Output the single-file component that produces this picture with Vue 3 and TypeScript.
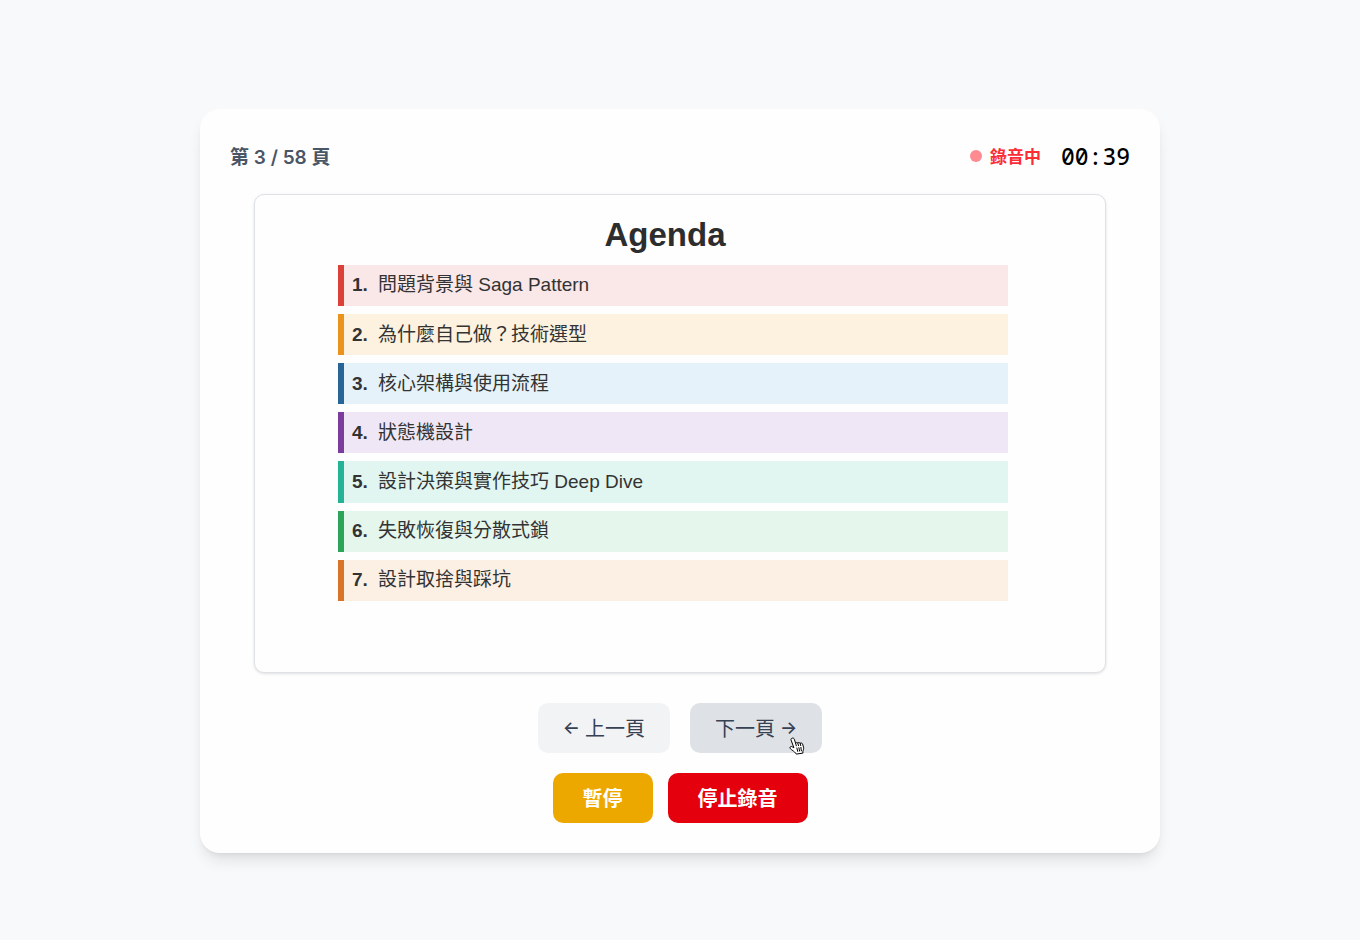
<script setup lang="ts">
import { ref } from 'vue'

interface AgendaItem {
  title: string
  tone: string
}

const page = ref(3)
const total = 58
const paused = ref(false)

const agenda: AgendaItem[] = [
  { title: '問題背景與 Saga Pattern', tone: 'red' },
  { title: '為什麼自己做？技術選型', tone: 'amber' },
  { title: '核心架構與使用流程', tone: 'blue' },
  { title: '狀態機設計', tone: 'purple' },
  { title: '設計決策與實作技巧 Deep Dive', tone: 'teal' },
  { title: '失敗恢復與分散式鎖', tone: 'green' },
  { title: '設計取捨與踩坑', tone: 'orange' },
]
</script>

<template>
  <main class="page">
    <section class="card">
      <header class="head">
        <span class="counter">第 {{ page }} / {{ total }} 頁</span>
        <div class="status">
          <span class="recording"><i class="dot"></i>錄音中</span>
          <time class="timer">00:39</time>
        </div>
      </header>

      <article class="slide">
        <h1>Agenda</h1>
        <ol class="agenda">
          <li v-for="(item, i) in agenda" :key="item.title" :class="item.tone">
            <b>{{ i + 1 }}.</b><span>{{ item.title }}</span>
          </li>
        </ol>
      </article>

      <nav class="row pages">
        <button type="button" class="btn prev" @click="page = Math.max(1, page - 1)">
          <span class="arrow">←</span> <span>上一頁</span>
        </button>
        <button type="button" class="btn next" @click="page = Math.min(total, page + 1)">
          <span>下一頁</span> <span class="arrow">→</span>
          <svg class="pointer" viewBox="0 0 16 18" aria-hidden="true">
            <path
              d="M3.2 1.2C4.2.8 5 1.3 5.3 2.2L6.6 6.2C7.1 5.4 8.3 5.3 8.8 6.1C9.4 5.3 10.7 5.4 11.1 6.3C11.9 5.7 13.2 6 13.6 7L14.5 10.2C14.9 11.7 14.4 13 13.9 14.2L13.9 16.1L7.3 17.1C6.5 15.5 4.7 14.3 3.1 13.1C2.1 12.4.8 11.5 1 10.5C1.2 9.4 2.5 9.2 3.4 9.9L4.9 10.8L2.1 3.1C1.8 2.1 2.2 1.5 3.2 1.2Z"
              fill="#fff" stroke="#000" stroke-width="1" stroke-linejoin="round"
            />
            <path d="M6.6 6.2L7.3 8.8M8.8 6.1L9.5 8.6M11.1 6.3L11.7 8.6M7.9 11L8.7 14.4M9.9 10.7L10.6 14.1M11.9 10.4L12.4 13.8" fill="none" stroke="#000" stroke-width="1" stroke-linecap="round" />
          </svg>
        </button>
      </nav>
      <div class="row actions">
        <button type="button" class="btn pause" @click="paused = !paused">暫停</button>
        <button type="button" class="btn stop">停止錄音</button>
      </div>
    </section>
  </main>
</template>

<style>
body {
  margin: 0;
  background: #f8f9fb;
}
</style>

<style scoped>
* {
  box-sizing: border-box;
}

.page {
  display: flex;
  align-items: center;
  justify-content: center;
  min-height: 100vh;
  padding: 42px 20px 20px;
  font-family: Inter, 'Noto Sans CJK TC', sans-serif;
  font-size: 20px;
}

.card {
  width: 100%;
  max-width: 960px;
  padding: 30px;
  border-radius: 20px;
  background: #fefefe;
  box-shadow: 0 10px 15px -3px rgb(0 0 0 / 10%), 0 4px 6px -4px rgb(0 0 0 / 10%);
}

.head {
  display: flex;
  align-items: center;
  justify-content: space-between;
  height: 35px;
  padding-bottom: 1px;
}

.counter {
  color: #4a5565;
  font-size: 19px;
  font-weight: 600;
}

.status,
.recording {
  display: flex;
  align-items: center;
}

.status {
  gap: 20px;
}

.recording {
  gap: 8px;
  color: #fb2c36;
  font-size: 17px;
  font-weight: 600;
}

.dot {
  width: 12px;
  height: 12px;
  border-radius: 50%;
  background: #fd8b91;
}

.timer {
  color: #000;
  font-family: 'Noto Sans Mono', 'DejaVu Sans Mono', monospace;
  font-size: 23px;
  font-weight: 500;
}

.slide {
  max-width: 852px;
  aspect-ratio: 16 / 9;
  margin: 20px auto 30px;
  padding: 20px 97px 0 83px;
  border: 1px solid #dee2e6;
  border-radius: 10px;
  background: #fefefe;
  box-shadow: 0 1px 3px rgb(0 0 0 / 12%);
  color: #2d2d2d;
  font-family: 'Liberation Sans', 'Noto Sans CJK TC', sans-serif;
}

h1 {
  margin: 0 0 10px;
  padding-right: 16px;
  font-size: 33px;
  line-height: 40px;
  text-align: center;
}

.agenda {
  display: grid;
  grid-auto-rows: 1fr;
  gap: 8px;
  height: 336px;
  margin: 0;
  padding: 0;
  list-style: none;
}

.agenda li {
  display: flex;
  align-items: center;
  border-left: 6px solid var(--edge);
  padding-left: 8px;
  font-size: 19px;
  line-height: 24px;
}

.agenda b {
  width: 26px;
}

.agenda b,
.agenda span {
  color: #333;
}

.red { --edge: #dc4139; background: #fae7e8; }
.amber { --edge: #ea941d; background: #fdf2e0; }
.blue { --edge: #276597; background: #e5f2f9; }
.purple { --edge: #7c3c9b; background: #f0e7f6; }
.teal { --edge: #24b394; background: #e1f6f1; }
.green { --edge: #2ca45a; background: #e5f6ed; }
.orange { --edge: #d97328; background: #fcefe4; }

.row {
  display: flex;
  justify-content: center;
}

.pages {
  gap: 20px;
  margin-bottom: 20px;
}

.actions {
  gap: 15px;
}

.btn {
  position: relative;
  display: flex;
  align-items: center;
  height: 50px;
  padding: 0 30px 2px;
  border: 0;
  border-radius: 10px;
  color: #fff;
  font: inherit;
  font-weight: 600;
  cursor: pointer;
}

.prev,
.next {
  gap: 5px;
  padding: 0 25px 2px;
  color: #364153;
  font-weight: 400;
}

.arrow {
  font-size: 18px;
  font-weight: 500;
}

.prev { background: #f1f3f5; }
.next { background: #dee2e6; }
.pause { background: #eda800; }
.stop { background: #e4000c; }

.pointer {
  position: absolute;
  right: 17px;
  bottom: -2px;
  width: 16px;
  height: 18px;
}
</style>
